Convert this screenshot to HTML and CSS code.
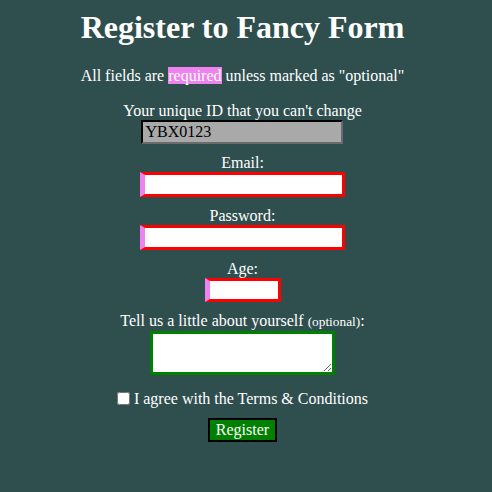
FILE: index.html
```html
<!DOCTYPE html>
<html lang="en">
<head>
<meta charset="utf-8">
<title>Register to Fancy Form</title>
<link rel="stylesheet" href="styles.css">
</head>
<body>
<main class="page">
  <h1 class="title">Register to Fancy Form</h1>
  <p class="intro">All fields are <mark class="req">required</mark> unless marked as "optional"</p>
  <form class="form">
    <div class="field">
      <label class="label" for="uid">Your unique ID that you can't change</label>
      <input class="ctl ctl-id" id="uid" type="text" value="YBX0123" readonly>
    </div>
    <div class="field">
      <label class="label" for="email">Email:</label>
      <input class="ctl ctl-req ctl-wide" id="email" type="email">
    </div>
    <div class="field">
      <label class="label" for="pw">Password:</label>
      <input class="ctl ctl-req ctl-wide" id="pw" type="password">
    </div>
    <div class="field">
      <label class="label" for="age">Age:</label>
      <input class="ctl ctl-req ctl-age" id="age" type="text">
    </div>
    <div class="field">
      <label class="label" for="about">Tell us a little about yourself <small class="opt">(optional)</small>:</label>
      <textarea class="ctl ctl-area" id="about"></textarea>
    </div>
    <div class="agree">
      <input class="check" id="terms" type="checkbox"><label for="terms">I agree with the Terms &amp; Conditions</label>
    </div>
    <div class="actions">
      <button class="btn" type="submit">Register</button>
    </div>
  </form>
</main>
</body>
</html>
```

FILE: styles.css
```css
html {
  background: #2f4f4f;
}
body {
  margin: 8px 15px 8px 8px;
  background: #2f4f4f;
  color: #ffffff;
  font-family: "Liberation Serif", "Times New Roman", serif;
  font-size: 16px;
  line-height: 18px;
}
.page {
  text-align: center;
}
.title {
  margin: 1px 0 21px;
  font-size: 32px;
  line-height: 37px;
  font-weight: bold;
}
.intro {
  margin: 0 0 16px;
}
.req {
  background: #ee82ee;
  color: #ffffff;
}
.form {
  display: flex;
  flex-direction: column;
  align-items: center;
}
.field {
  display: flex;
  flex-direction: column;
  align-items: center;
  margin-bottom: 9px;
}
.label {
  display: block;
  line-height: 19px;
}
.opt {
  font-size: 13.33px;
}
.ctl {
  box-sizing: border-box;
  margin: 0;
  font-family: "Liberation Serif", "Times New Roman", serif;
  font-size: 16px;
  padding: 1px 2px;
  background: #ffffff;
  color: #000000;
}
.ctl-id {
  width: 202px;
  height: 24px;
  border: 2px inset #767676;
  border-top-color: #2b2b2b;
  border-left-color: #2b2b2b;
  border-right-color: #6b6b6b;
  border-bottom-color: #6b6b6b;
  background: #a9a9a9;
  outline: none;
}
.ctl-req {
  height: 25px;
  border: 3px solid #ff0000;
  border-left: 5px solid #ee82ee;
}
.ctl-wide {
  width: 205px;
}
.ctl-age {
  width: 76px;
  height: 24px;
}
.ctl-area {
  width: 185px;
  height: 44px;
  border: 3px solid #008000;
  font-family: "Liberation Mono", monospace;
  font-size: 13px;
}
.agree {
  margin-top: 5px;
  display: flex;
  align-items: center;
  justify-content: center;
}
.check {
  width: 13px;
  height: 13px;
  margin: 3px 4px 3px 0;
}
.actions {
  margin-top: 10px;
}
.btn {
  box-sizing: border-box;
  height: 24px;
  padding: 1px 6px;
  background: #008000;
  color: #ffffff;
  border: 2px solid #000000;
  font-family: "Liberation Serif", "Times New Roman", serif;
  font-size: 16px;
  line-height: 18px;
}
```
